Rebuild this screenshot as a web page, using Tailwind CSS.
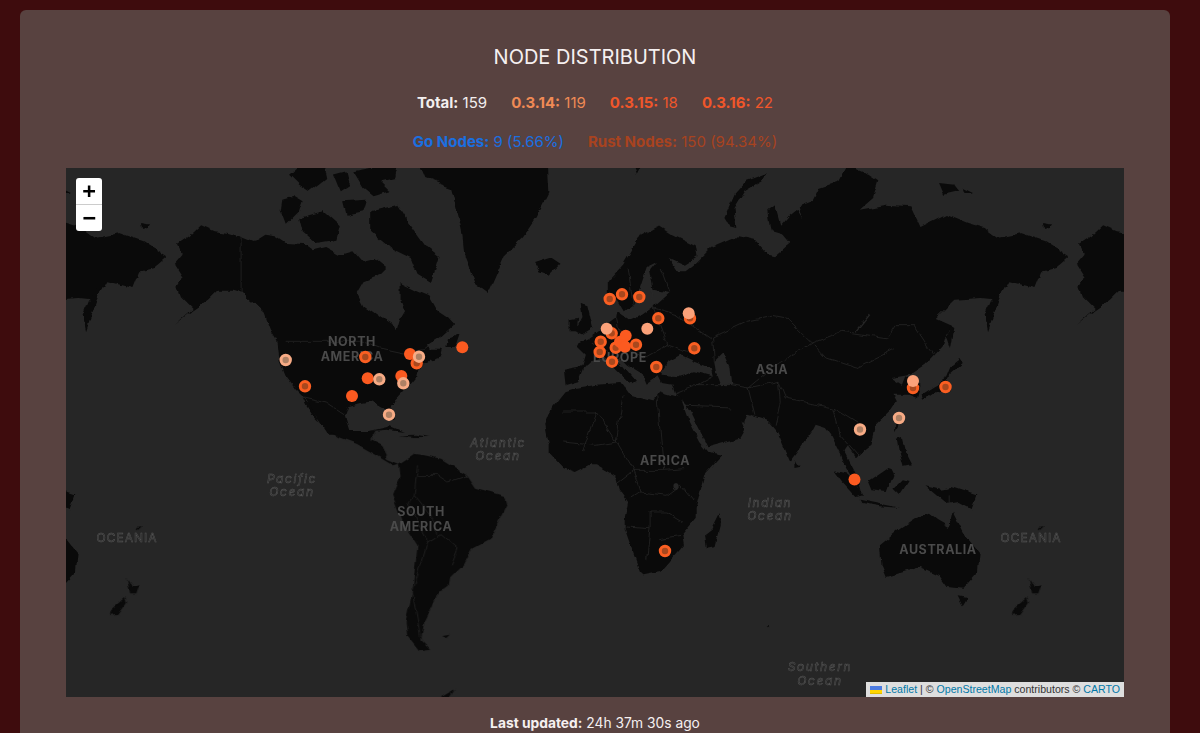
<!DOCTYPE html>
<html>

<head>
    <meta name="viewport" content="width=device-width, initial-scale=1.0">
    <script src="https://cdn.jsdelivr.net/npm/@tailwindcss/browser@4"></script>
    <title>Node distribution</title>
</head>

<body class="h-screen overflow-hidden bg-[#3e0c0d] font-[Inter,sans-serif] text-white">
    <div class="ml-5 mt-2.5 w-[1150px] rounded-md bg-[#584240] px-[46px] pb-8 pt-[33px]">
        <h1 class="text-center text-xl leading-7 text-[#f5f0f0]">NODE DISTRIBUTION</h1>

        <div class="mt-5 flex justify-center gap-6 text-[15px] leading-6">
            <span class="text-[#f2eeee]"><b>Total:</b> 159</span>
            <span class="text-[#f08a55]"><b>0.3.14:</b> 119</span>
            <span class="text-[#f0562a]"><b>0.3.15:</b> 18</span>
            <span class="text-[#f0562a]"><b>0.3.16:</b> 22</span>
        </div>
        <div class="mt-[15px] flex justify-center gap-6 text-[15px] leading-6">
            <span class="text-[#1a6fe0]"><b>Go Nodes:</b> 9 (5.66%)</span>
            <span class="text-[#a8431f]"><b>Rust Nodes:</b> 150 (94.34%)</span>
        </div>

        <!-- map -->
        <div class="relative mt-3.5 h-[529px] w-[1058px] overflow-hidden bg-[#262626]">
            <svg class="block" width="1058" height="529" viewBox="66 168 1058 529">
                <defs>
                    <!-- roughens the hand drawn coastlines -->
                    <filter id="coast" filterUnits="userSpaceOnUse" x="100" y="140" width="1060" height="590" color-interpolation-filters="sRGB">
                        <feTurbulence type="fractalNoise" baseFrequency=".07" numOctaves="4" seed="7" result="n"/>
                        <feDisplacementMap in="SourceGraphic" in2="n" scale="6" xChannelSelector="R" yChannelSelector="G"/>
                        <feGaussianBlur stdDeviation=".3"/>
                    </filter>
                </defs>
                <g id="world" filter="url(#coast)">
                    <!-- americas top, atlantic islands -->
                    <g transform="translate(66 168) scale(.338 .3333)" fill="#0a0a0a">
                        <path d="M330 228 365 205 400 172 440 190 480 195 518 207 556 222 590 200 620 205 650 225 700 228 730 250 770 240 810 262 850 250 880 285 920 275 950 300 930 320 880 340 860 375 880 415 930 450 965 470 975 490 985 455 1000 430 990 400 990 345 1040 370 1075 385 1100 430 1130 450 1148 470 1110 505 1070 530 1085 545 1115 545 1110 565 1075 575 1055 590 1040 610 1035 630 1010 660 975 700 960 715 975 755 960 755 940 720 905 700 870 705 835 715 825 745 840 797 775 797 740 745 710 695 680 665 650 625 632 580 625 520 610 495 590 440 560 410 520 375 490 365 450 365 420 395 370 430 320 470 375 420 340 385 330 355 345 330 320 290 345 260Z"/>
                        <path d="M700 690 725 715 750 765 735 750 710 712Z"/>
                        <path d="M640 95 675 85 700 100 690 130 650 170 635 130Z"/>
                        <path d="M690 150 760 130 810 175 800 215 740 225 700 190Z"/>
                        <path d="M660 20 700 -15 760 -15 770 30 720 70 690 50Z"/>
                        <path d="M790 20 830 10 840 50 810 70Z"/>
                        <path d="M850 10 980 -15 970 30 930 40 960 70 910 85 880 60Z"/>
                        <path d="M820 100 890 95 880 130 830 140Z"/>
                        <path d="M900 130 980 110 1010 160 1060 230 1105 265 1080 345 1040 320 1020 270 960 240 900 190Z"/>
                        <path d="M1040 -20 1425 -20 1430 70 1390 150 1350 210 1300 260 1250 375 1210 345 1180 270 1170 180 1140 60 1060 30Z"/>
                        <path d="M1385 285 1430 270 1460 290 1430 320 1400 310Z"/>
                        <path d="M1130 510 1165 495 1150 540 1125 540Z"/>
                        <path d="M895 790 960 775 1000 792 950 785Z"/>
                        <path d="M1520 405 1545 410 1562 480 1530 500 1505 490 1525 450Z"/>
                        <path d="M1490 460 1515 455 1510 490 1490 490Z"/>
                        <path d="M220 170 245 165 240 178 222 178Z"/>
                    </g>

                    <!-- eurasia and africa -->
                    <g transform="translate(596 168) scale(.338 .3333)" fill="#0a0a0a">
                        <path d="M-90 652-95 605-40 595-30 560-60 530-20 510 20 480 60 450 62 428 85 445 95 460 130 445 165 420 215 375 170 365 160 310 180 285 150 300 130 360 110 410 85 430 65 395 35 385 35 340 80 290 130 205 185 175 225 200 295 235 300 265 260 290 215 270 240 310 265 310 290 290 340 240 420 205 470 215 510 260 530 265 575 225 555 200 520 190 510 130 530 115 545 170 570 140 595 120 610 155 600 115 640 100 660 60 720 40 745 -10 790 10 835 40 820 90 780 125 860 110 930 115 960 180 1040 140 1100 165 1150 180 1190 210 1260 195 1330 220 1400 265 1360 300 1320 310 1300 360 1220 340 1190 395 1140 390 1060 395 1005 450 1050 470 1045 480 1030 530 975 590 930 620 875 630 905 650 915 625 960 650 950 690 925 680 880 680 890 700 870 730 830 770 815 830 790 850 770 870 745 835 735 850 760 900 775 930 790 985 740 900 725 860 695 800 680 780 650 770 640 790 575 880 545 810 535 790 510 760 450 740 440 770 430 760 440 785 425 812 330 838 312 800 270 715 235 680 225 650 195 645 185 625 150 650 135 615 95 590 70 565 65 575 115 635 100 645 55 600 25 570-15 580-35 600-50 640Z"/>
                        <path d="M380 150 410 80 450 35 505 15 490 40 440 70 410 120 415 180 395 175Z"/>
                        <path d="M105 -15 135 -15 118 20Z"/>
                        <path d="M1015 45 1060 50 1075 70 1030 80Z"/>
                        <path d="M1085 60 1115 75 1090 75Z"/>
                        <path d="M1320 165 1350 170 1330 180Z"/>
                        <path d="M1215 340 1190 400 1160 490 1150 440 1165 400 1210 345Z"/>
                        <path d="M1045 470 1060 480 1050 540 1040 510Z"/>
                        <path d="M1050 590 1075 570 1085 585 1045 620 1040 640 1050 670 1000 670 965 695 960 680 1000 655 1030 640Z"/>
                        <path d="M885 765 895 770 885 790Z"/>
                        <!-- inland water -->
                        <path fill="#262626" d="M190 615 215 580 250 560 290 580 340 600 345 625 290 610 240 625 195 620Z"/>
                        <path fill="#262626" d="M350 580 375 555 395 600 400 650 370 650 355 610Z"/>
                        <path fill="none" stroke="#262626" stroke-width="4" d="M770 490 810 440"/>
                        <!-- country lines -->
                        <g fill="none" stroke="#2a2a2a" stroke-width="2">
                            <path d="M345 510 450 460 520 445 570 455 640 525 730 490 860 510 885 470 940 470 985 540 1000 560"/>
                            <path d="M640 525 680 570 770 600 880 545"/>
                            <path d="M400 650 450 660 540 640 560 690 700 720 780 770"/>
                            <path d="M345 510 350 580M450 660 520 600 640 525M450 660 470 740M540 640 545 700 530 770"/>
                            <path d="M270 715 400 720M300 650 400 650M230 680 300 650 345 625"/>
                            <path d="M165 350 170 420 240 440 340 510M190 300 215 370M95 300 110 410M170 420 210 530 290 560"/>
                            <path d="M60 450 80 540 140 570 210 530M-15 520 40 560M-30 595 20 570"/>
                            <path d="M700 720 720 800M720 800 780 870"/>
                        </g>
                    </g>

                    <!-- south america, pacific -->
                    <g transform="translate(66 432) scale(.338 .3333)" fill="#0a0a0a">
                        <path d="M780 -3 915 -3 900 25 930 40 950 80 985 95 970 100 920 70 860 35 805 15Z"/>
                        <path d="M1030 65 1060 70 1110 80 1180 125 1210 170 1300 195 1305 215 1255 320 1200 350 1175 400 1140 435 1135 465 1100 480 1085 520 1060 570 1050 620 1080 650 1045 655 1010 610 1005 570 1025 480 1040 340 995 270 965 190 990 130 985 95Z"/>
                        <path d="M985 10 1040 8 1075 15 1030 15Z"/>
                        <path d="M1110 610 1135 605 1125 615Z"/>
                        <path d="M1100 800 1150 770 1130 800Z"/>
                        <path d="M180 435 195 465 215 460 205 490 190 490Z"/>
                        <path d="M175 495 180 510 155 545 130 548 135 530Z"/>
                        <path d="M45 195 60 205 50 210ZM210 285 225 282 215 292Z"/>
                        <g fill="none" stroke="#2a2a2a" stroke-width="2">
                            <path d="M1040 100 1030 190 1015 210 1040 270 1070 330 1110 305 1160 350 1140 400M1070 330 1050 400 1025 480 1050 620"/>
                            <path d="M1040 130 1100 130 1130 150 1190 130M1100 305 1085 260 1030 190"/>
                        </g>
                    </g>

                    <!-- africa, oceania -->
                    <g transform="translate(596 432) scale(.338 .3333)" fill="#0a0a0a">
                        <path d="M-150 -22-130 -72-90 -122-60 -132 0 -142 75 -147 100 -112 165 -92 185 -122 250 -102 275 -30 305 30 330 60 375 68 320 130 295 230 295 260 255 310 260 340 190 420 140 430 130 420 85 290 85 260 95 210 70 175 60 135 0 100-20 100-60 120-100 105-140 60-140 30Z"/>
                        <path d="M365 250 370 265 350 345 325 350 320 310 345 290Z"/>
                        <path d="M705 115 745 125 790 190 770 195 730 150Z"/>
                        <path d="M805 150 870 105 880 125 860 180 815 175Z"/>
                        <path d="M780 200 900 225 840 220 785 210Z"/>
                        <path d="M880 170 905 145 925 150 900 190Z"/>
                        <path d="M890 20 905 15 915 60 935 100 910 105 895 50Z"/>
                        <path d="M975 160 1020 170 1050 165 1125 190 1110 232 1070 210 1040 215 1010 190Z"/>
                        <path d="M840 340 900 290 945 260 985 245 1010 265 1045 285 1055 240 1085 300 1135 365 1130 420 1085 470 1040 465 1015 430 960 405 860 435 845 400Z"/>
                        <path d="M1070 490 1100 495 1085 520Z"/>
                        <path d="M590 85 605 105 590 108Z"/>
                        <path d="M505 580 518 580 512 586Z"/>
                        <g fill="none" stroke="#2a2a2a" stroke-width="2">
                            <path d="M65 150 110 115 200 115 260 110M110 115 130 180 100 200M130 180 210 190 250 160 290 210M90 285 160 290 160 240 210 240 260 270M160 290 150 380M190 320 250 310"/>
                            <path d="M-100 -60 0 -60 60 30 110 115M80 -110 60 30M180 -110 200 115M0 -60-40 60M-100 30 0 40 60 30"/>
                            <path d="M1045 190 1045 215"/>
                        </g>
                        <circle cx="238" cy="162" r="9" fill="#262626"/>
                    </g>

                    <!-- north america borders -->
                    <g transform="translate(66 168) scale(.338 .3333)" fill="none" stroke="#2a2a2a" stroke-width="2">
                        <path d="M650 520 880 520 930 540 1000 555 1060 545 1080 530"/>
                        <path d="M518 207 518 375 590 440"/>
                        <path d="M705 690 770 705 830 745"/>
                    </g>
                </g>
                <use href="#world" x="-902"/>
                <use href="#world" x="902"/>

                <!-- labels -->
                <g font-family="Inter, sans-serif" font-weight="700" font-size="12.5" letter-spacing=".6" fill="#4a4a4a" text-anchor="middle">
                    <text x="352" y="346">NORTH</text>
                    <text x="352" y="361">AMERICA</text>
                    <text x="620" y="362">EUROPE</text>
                    <text x="772" y="374">ASIA</text>
                    <text x="665" y="465">AFRICA</text>
                    <text x="421" y="516">SOUTH</text>
                    <text x="421" y="531">AMERICA</text>
                    <text x="938" y="554">AUSTRALIA</text>
                </g>
                <g font-family="Inter, sans-serif" font-size="12" letter-spacing="1" fill="#262626" stroke="#5a5a5a" stroke-width=".45" text-anchor="middle">
                    <text x="127" y="542">OCEANIA</text>
                    <text x="1031" y="542">OCEANIA</text>
                </g>
                <g font-family="Inter, sans-serif" font-style="italic" font-size="12" letter-spacing="1.6" fill="#262626" stroke="#5a5a5a" stroke-width=".45" text-anchor="middle">
                    <text x="498" y="447">Atlantic</text>
                    <text x="498" y="460">Ocean</text>
                    <text x="292" y="483">Pacific</text>
                    <text x="292" y="496">Ocean</text>
                    <text x="770" y="507">Indian</text>
                    <text x="770" y="520">Ocean</text>
                    <text x="820" y="671">Southern</text>
                    <text x="820" y="685">Ocean</text>
                </g>

                <!-- 0.3.15 / 0.3.16 -->
                <g fill="#a8481e" stroke="#fb5f22" stroke-width="3">
                    <circle cx="305" cy="386.3" r="4.7"/>
                    <circle cx="365.3" cy="357" r="4.7"/>
                    <circle cx="416.7" cy="363.3" r="4.7"/>
                    <circle cx="609.7" cy="299" r="4.7"/>
                    <circle cx="622" cy="294.3" r="4.7"/>
                    <circle cx="639.3" cy="297" r="4.7"/>
                    <circle cx="658.3" cy="318.3" r="4.7"/>
                    <circle cx="600.7" cy="341.7" r="4.7"/>
                    <circle cx="599.7" cy="352" r="4.7"/>
                    <circle cx="612" cy="361.7" r="4.7"/>
                    <circle cx="636" cy="344.7" r="4.7"/>
                    <circle cx="656.3" cy="367" r="4.7"/>
                    <circle cx="694.3" cy="348.3" r="4.7"/>
                    <circle cx="611.7" cy="333.3" r="4.7"/>
                    <circle cx="615.7" cy="347.7" r="4.7"/>
                    <circle cx="690" cy="318.3" r="4.7"/>
                    <circle cx="945.5" cy="387" r="4.7"/>
                    <circle cx="665" cy="551" r="4.7"/>
                    <circle cx="913" cy="388" r="4.7"/>
                </g>
                <!-- stacked markers, read as solid -->
                <g fill="#fb5a20">
                    <circle cx="462.3" cy="347.3" r="6"/>
                    <circle cx="410" cy="354" r="6"/>
                    <circle cx="367.7" cy="378.3" r="6"/>
                    <circle cx="401.3" cy="376" r="6"/>
                    <circle cx="352" cy="396" r="6"/>
                    <circle cx="854.5" cy="479.5" r="6"/>
                    <circle cx="625.7" cy="335.7" r="6"/>
                    <circle cx="620" cy="341.7" r="6"/>
                    <circle cx="623.3" cy="345" r="6"/>
                    <circle cx="625" cy="346.7" r="6"/>
                </g>
                <!-- 0.3.14 -->
                <g fill="#ad8064" stroke="#f7ab85" stroke-width="3">
                    <circle cx="285.7" cy="360" r="4.7"/>
                    <circle cx="379.3" cy="379.3" r="4.7"/>
                    <circle cx="403.3" cy="383.3" r="4.7"/>
                    <circle cx="419" cy="356.7" r="4.7"/>
                    <circle cx="389" cy="414.7" r="4.7"/>
                    <circle cx="899" cy="418" r="4.7"/>
                    <circle cx="860" cy="429.5" r="4.7"/>
                </g>
                <g fill="#fba27a">
                    <circle cx="647.3" cy="328.7" r="6"/>
                    <circle cx="688.7" cy="313.3" r="6"/>
                    <circle cx="606.7" cy="328.7" r="6"/>
                    <circle cx="913" cy="381" r="6"/>
                </g>
            </svg>

            <!-- zoom control -->
            <div class="absolute left-2.5 top-2.5 w-[26px] overflow-hidden rounded-[3px] bg-white text-black">
                <div class="flex h-[27px] items-center justify-center border-b border-[#ccc] font-['DejaVu_Sans_Mono'] text-[22px] font-bold leading-none">+</div>
                <div class="flex h-[26px] items-center justify-center font-['DejaVu_Sans_Mono'] text-[22px] font-bold leading-none">&minus;</div>
            </div>

            <!-- attribution -->
            <div class="absolute bottom-0 right-0 flex h-[15px] items-center whitespace-pre bg-[#dedede] px-[4px] font-['Liberation_Sans'] text-[10.6px] leading-none text-[#333]">
                <svg class="mr-[3px]" width="12" height="8" viewBox="0 0 12 8"><path fill="#4C7BE1" d="M0 0h12v4H0z"/><path fill="#FFD500" d="M0 4h12v3H0z"/><path fill="#E0BC00" d="M0 7h12v1H0z"/></svg><span class="text-[#0078a8]">Leaflet</span> | © <span class="text-[#0078a8]">OpenStreetMap</span> contributors © <span class="text-[#0078a8]">CARTO</span>
            </div>
        </div>

        <p class="mt-3.5 text-center text-[13.8px] leading-6 text-[#f5f0f0]"><b>Last updated:</b> 24h 37m 30s ago</p>
    </div>
</body>

</html>
